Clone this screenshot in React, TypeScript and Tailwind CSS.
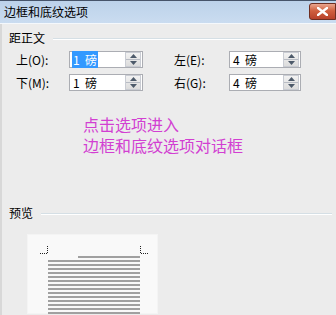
import React from 'react';

const font = { fontFamily: '"Noto Sans CJK SC", "Liberation Sans", sans-serif' };

const GroupHeader: React.FC<{ title: string; className?: string }> = ({ title, className }) => (
  <div className={`flex items-center gap-2 pl-[7px] pr-1 ${className ?? ''}`}>
    <span className="text-[12px] leading-4 text-black">{title}</span>
    <div className="h-px flex-1 bg-[#d5dfe5] shadow-[0_1px_0_#ffffff]" />
  </div>
);

const Spinner = () => (
  <div className="flex h-[15px] w-[16px] flex-col border border-[#c9ccd3] bg-[linear-gradient(#f2f2f2,#dcdcdc)]">
    <div className="flex flex-1 items-center justify-center border-b border-[#b8bcc4]">
      <svg width="7" height="4" viewBox="0 0 7 4">
        <path d="M0 4 L3.5 0 L7 4 Z" fill="#4d5a6a" />
      </svg>
    </div>
    <div className="flex flex-1 items-center justify-center">
      <svg width="7" height="4" viewBox="0 0 7 4">
        <path d="M0 0 L3.5 4 L7 0 Z" fill="#4d5a6a" />
      </svg>
    </div>
  </div>
);

const SpinInput: React.FC<{ value: string; selected?: boolean; width: string }> = ({ value, selected, width }) => (
  <div className={`flex h-[17px] ${width} items-center border border-[#abadb3] bg-white pl-[2px] pr-px`}>
    <span className="flex-1 whitespace-pre text-[12px] leading-[14px]">
      {selected ? <span className="bg-[#3399ff] px-px text-white">{value}</span> : <span className="px-px">{value}</span>}
    </span>
    <Spinner />
  </div>
);

const Field: React.FC<{ label: string; value: string; selected?: boolean; labelW: string; inputW: string }> = ({
  label,
  value,
  selected,
  labelW,
  inputW,
}) => (
  <div className="flex items-center">
    <span className={`${labelW} text-[12px] leading-4 text-black`}>{label}</span>
    <SpinInput value={value} selected={selected} width={inputW} />
  </div>
);

export default function App() {
  return (
    <div className="flex h-screen w-full flex-col overflow-hidden bg-[#ececec]" style={font}>
      {/* title bar */}
      <div className="flex h-[24px] shrink-0 items-center border-y border-t-[#46546a] border-b-[#f4f8fc] bg-[linear-gradient(#bcd2ea,#cadcf0)] pl-1">
        <span className="flex-1 text-[12px] leading-4 text-black">边框和底纹选项</span>
        <div className="mb-[2px] flex h-[17px] w-[27px] shrink-0 items-center justify-center rounded-l-[3px] border border-[#6e2f22] bg-[#c9553b] bg-[linear-gradient(#eaa68f,#d0603f_45%,#b8422a)]">
          <svg width="11" height="9" viewBox="0 0 11 9">
            <path d="M1 1 L10 8 M10 1 L1 8" stroke="#ffffff" strokeWidth="2.4" strokeLinecap="square" />
          </svg>
        </div>
      </div>

      <div className="flex min-h-0 flex-1 flex-col border-l-2 border-[#d8d8d8]">
        <GroupHeader title="距正文" className="mt-[6px]" />

        <div className="mt-[5px] flex flex-col gap-[6px] pl-[14px]">
          <div className="flex gap-[31px]">
            <Field label="上(O):" value="1  磅" selected labelW="w-[53px]" inputW="w-[74px]" />
            <Field label="左(E):" value="4  磅" labelW="w-[55px]" inputW="w-[72px]" />
          </div>
          <div className="flex gap-[31px]">
            <Field label="下(M):" value="1  磅" labelW="w-[53px]" inputW="w-[74px]" />
            <Field label="右(G):" value="4  磅" labelW="w-[55px]" inputW="w-[72px]" />
          </div>
        </div>

        <div className="mt-[23px] flex flex-col gap-px pl-[81px] text-[16px] leading-[20px] text-[#d23fd2]">
          <p>点击选项进入</p>
          <p>边框和底纹选项对话框</p>
        </div>

        <GroupHeader title="预览" className="mt-[50px]" />

        <div className="mt-[13px] ml-[25px] h-[80px] w-[131px] shrink-0 border border-[#f4f4f4] bg-[#f9f9f9]">
          <svg width="131" height="80" viewBox="0 0 131 80">
            <path d="M12 18.5 H19.5 V11" stroke="#222" strokeWidth="1" strokeDasharray="1 1" fill="none" />
            <path d="M112.5 11 V18.5 H120" stroke="#222" strokeWidth="1" strokeDasharray="1 1" fill="none" />
            <rect x="50" y="21" width="62" height="2" fill="#a0a0a0" />
            {Array.from({ length: 14 }).map((_, i) => (
              <rect key={i} x="20" y={25 + i * 4} width="92" height="2" fill="#a0a0a0" />
            ))}
          </svg>
        </div>
      </div>
    </div>
  );
}
